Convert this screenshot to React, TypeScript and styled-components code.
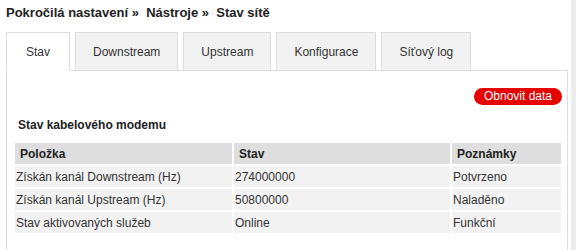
import React from 'react';
import styled, { createGlobalStyle } from 'styled-components';

const GlobalStyle = createGlobalStyle`
  html, body {
    margin: 0;
    padding: 0;
    background: #fff;
  }
  body {
    font-family: "Liberation Sans", Arial, sans-serif;
    color: #333;
  }
`;

const tabs = ['Stav', 'Downstream', 'Upstream', 'Konfigurace', 'Síťový log'];

const rows = [
  { item: 'Získán kanál Downstream (Hz)', state: '274000000', note: 'Potvrzeno' },
  { item: 'Získán kanál Upstream (Hz)', state: '50800000', note: 'Naladěno' },
  { item: 'Stav aktivovaných služeb', state: 'Online', note: 'Funkční' },
];

const App: React.FC = () => {
  return (
    <Page>
      <GlobalStyle />
      <Breadcrumb>Pokročilá nastavení » &nbsp;Nástroje » &nbsp;Stav sítě</Breadcrumb>
      <TabList>
        {tabs.map((t, i) => (
          <Tab key={t} $active={i === 0}>
            {t}
          </Tab>
        ))}
      </TabList>
      <Panel>
        <Toolbar>
          <RefreshButton type="button">Obnovit data</RefreshButton>
        </Toolbar>
        <SectionTitle>Stav kabelového modemu</SectionTitle>
        <Table>
          <colgroup>
            <col style={{ width: 217 }} />
            <col style={{ width: 216 }} />
            <col />
          </colgroup>
          <thead>
            <tr>
              <Th>Položka</Th>
              <Th>Stav</Th>
              <Th>Poznámky</Th>
            </tr>
          </thead>
          <tbody>
            {rows.map(r => (
              <tr key={r.item}>
                <Td>{r.item}</Td>
                <Td>{r.state}</Td>
                <Td>{r.note}</Td>
              </tr>
            ))}
          </tbody>
        </Table>
      </Panel>
    </Page>
  );
};

export default App;

// Styled components
const Page = styled.div`
  width: 570px;
  min-height: 250px;
  box-sizing: border-box;
  padding: 0 0 0 6px;
  border-right: 5px solid #ececec;
  width: 576px;
`;

const Breadcrumb = styled.div`
  height: 26px;
  line-height: 26px;
  font-size: 13px;
  font-weight: bold;
  color: #222;
  white-space: pre;
`;

const TabList = styled.div`
  display: flex;
  gap: 4px;
  margin-top: 6px;
  position: relative;
  z-index: 1;
`;

const Tab = styled.div<{ $active?: boolean }>`
  box-sizing: border-box;
  height: 39px;
  min-width: 64px;
  padding: 0 17px;
  display: flex;
  align-items: center;
  justify-content: center;
  font-size: 12px;
  color: #333;
  border: 1px solid #dedede;
  border-bottom: ${p => (p.$active ? '1px solid #fff' : '1px solid #dedede')};
  background: ${p => (p.$active ? '#fff' : '#f2f2f2')};
  margin-right: 1px;
`;

const Panel = styled.div`
  box-sizing: border-box;
  width: 562px;
  min-height: 190px;
  margin-top: -1px;
  border: 1px solid #dedede;
  padding: 17px 5px 0 6px;
`;

const Toolbar = styled.div`
  display: flex;
  justify-content: flex-end;
`;

const RefreshButton = styled.button`
  height: 17px;
  width: 88px;
  padding: 0;
  border: none;
  border-radius: 9px;
  background: #e60000;
  color: #fff;
  font-family: "Liberation Sans", Arial, sans-serif;
  font-size: 12px;
  line-height: 17px;
  cursor: pointer;
`;

const SectionTitle = styled.div`
  margin: 10px 0 0 5px;
  height: 26px;
  line-height: 20px;
  font-size: 12px;
  font-weight: bold;
  color: #222;
`;

const Table = styled.table`
  width: 550px;
  border-collapse: separate;
  border-spacing: 2px;
  table-layout: fixed;
  font-size: 12px;
`;

const Th = styled.th`
  height: 21px;
  padding: 0 5px;
  text-align: left;
  background: #dedede;
  color: #222;
  font-weight: bold;
`;

const Td = styled.td`
  height: 21px;
  padding: 0 1px;
  background: #f2f2f2;
  color: #333;
`;
